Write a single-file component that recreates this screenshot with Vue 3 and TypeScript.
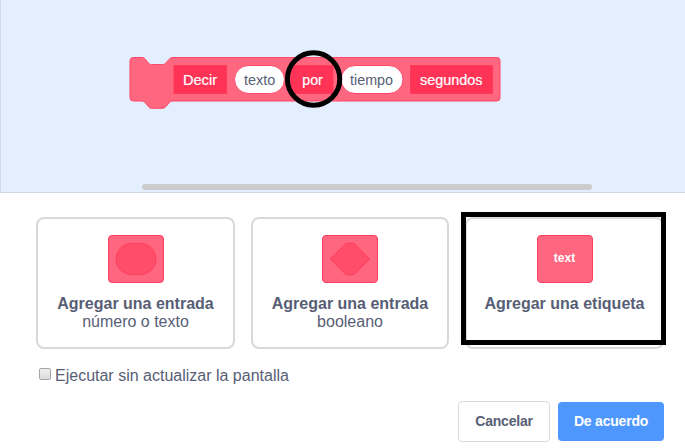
<script setup lang="ts">
import { ref } from 'vue'

interface BlockPart {
  kind: 'label' | 'input'
  text: string
  x: number
  width: number
  textX: number
  textWidth: number
}

interface Option {
  shape: 'round' | 'boolean' | 'label'
  title: string
  detail?: string
}

const parts: BlockPart[] = [
  { kind: 'label', text: 'Decir', x: 174, width: 52.5, textX: 183, textWidth: 34 },
  { kind: 'input', text: 'texto', x: 234.5, width: 50, textX: 244, textWidth: 31.3 },
  { kind: 'label', text: 'por', x: 290.5, width: 42.5, textX: 302.3, textWidth: 20.5 },
  { kind: 'input', text: 'tiempo', x: 341, width: 62, textX: 350, textWidth: 43 },
  { kind: 'label', text: 'segundos', x: 410.5, width: 82, textX: 420, textWidth: 62.5 },
]

const options: Option[] = [
  { shape: 'round', title: 'Agregar una entrada', detail: 'número o texto' },
  { shape: 'boolean', title: 'Agregar una entrada', detail: 'booleano' },
  { shape: 'label', title: 'Agregar una etiqueta' },
]

const warp = ref(false)
</script>

<template>
  <main class="dialog">
    <section class="workspace">
      <svg class="canvas" width="684" height="192" viewBox="1 0 684 192">
        <path
          class="block"
          d="M133.500 57.500H142C143.500 57.500 144.500 58.200 145.500 59.500L148 62.500C149.200 64 150 64.500 151.500 64.500H162.500C164 64.500 165 64 166.200 62.500L169 59.500C170 58.200 171 57.500 173 57.500H497Q500 57.500 500 60.500V98Q500 101 497 101H173C171 101 170 101.800 169 103L166.200 106.200C165 107.700 164 108.300 162.500 108.300H151.500C150 108.300 149.200 107.700 148 106.200L145.500 103C144.500 101.800 143.500 101 142 101H133.500Q130 101 130 98V60.500Q130 57.500 133.500 57.500Z"
        />
        <g v-for="part in parts" :key="part.text">
          <rect
            :class="part.kind"
            :x="part.x"
            y="65.500"
            :width="part.width"
            height="28"
            :rx="part.kind === 'input' ? 14 : 0"
          />
          <text
            :class="part.kind + '-text'"
            :x="part.textX"
            y="85"
            :textLength="part.textWidth"
            lengthAdjust="spacingAndGlyphs"
          >{{ part.text }}</text>
        </g>
        <circle class="ring" cx="313.600" cy="79" r="26.200" />
      </svg>
      <div class="scrollbar"></div>
    </section>

    <section class="options">
      <button v-for="option in options" :key="option.shape" class="option" type="button">
        <svg class="icon" width="56" height="48" viewBox="0 0 56 48">
          <rect class="tile" x=".5" y=".5" width="55" height="47" rx="3.500" />
          <rect v-if="option.shape === 'round'" class="slot" x="8" y="8.300" width="40" height="31.400" rx="15.700" />
          <path v-else-if="option.shape === 'boolean'" class="slot" d="M8.300 24 24 8.300H32L47.700 24 32 39.700H24Z" />
          <text v-else class="tile-text" x="27.500" y="27" text-anchor="middle">text</text>
        </svg>
        <strong>{{ option.title }}</strong>
        <span v-if="option.detail">{{ option.detail }}</span>
        <i v-if="option.shape === 'label'" class="marker"></i>
      </button>
    </section>

    <label class="warp">
      <input v-model="warp" type="checkbox" />
      <span>Ejecutar sin actualizar la pantalla</span>
    </label>

    <footer class="actions">
      <button class="cancel" type="button">Cancelar</button>
      <button class="accept" type="button">De acuerdo</button>
    </footer>
  </main>
</template>

<style>
body {
  margin: 0;
  background: #fff;
}
</style>

<style scoped>
.dialog {
  box-sizing: border-box;
  width: 685px;
  height: 448px;
  overflow: hidden;
  color: #575e75;
  font-family: "Liberation Sans", Arial, sans-serif;
}
.workspace {
  box-sizing: border-box;
  position: relative;
  height: 193px;
  border-left: 1px solid #cfdae5;
  border-bottom: 1px solid #cfdae5;
  background: #e3efff;
}
.canvas {
  display: block;
}
.block {
  fill: #ff6680;
  stroke: #ff4766;
}
.label {
  fill: #ff3355;
  stroke: #ff3b5c;
}
.input {
  fill: #fff;
  stroke: #ff4766;
}
.label-text,
.input-text {
  font-size: 14px;
}
.label-text {
  fill: #fff;
  stroke: #fff;
  stroke-width: .2px;
}
.input-text {
  fill: #575e75;
}
.ring {
  fill: none;
  stroke: #000;
  stroke-width: 5px;
}
.scrollbar {
  position: absolute;
  left: 141px;
  top: 184px;
  width: 450px;
  height: 6px;
  border-radius: 3px;
  background: #ccc;
}
.options {
  display: grid;
  grid-template-columns: 199px 198px 199px;
  gap: 16px;
  padding: 24px 0 0 36px;
}
button {
  box-sizing: border-box;
  margin: 0;
  font-family: inherit;
  color: inherit;
}
.option {
  position: relative;
  display: flex;
  flex-direction: column;
  align-items: center;
  height: 132px;
  padding: 16px 0 0;
  border: 2px solid #d9d9d9;
  border-radius: 8px;
  background: #fff;
  font-size: 16px;
  line-height: 18px;
}
.icon {
  display: block;
  margin-bottom: 12px;
}
.tile {
  fill: #ff6680;
  stroke: #ff3d5e;
}
.slot {
  fill: #ff4d6a;
  stroke: #ff3d5e;
}
.tile-text {
  fill: #fff;
  font-size: 12px;
  font-weight: 700;
}
.marker {
  box-sizing: border-box;
  position: absolute;
  left: -6px;
  top: -7px;
  width: 205px;
  height: 133px;
  border: 5px solid #000;
}
.warp {
  display: flex;
  align-items: center;
  height: 18px;
  margin: 18px 0 0 39px;
  font-size: 16px;
  line-height: 18px;
}
.warp input {
  appearance: none;
  box-sizing: border-box;
  width: 12px;
  height: 12px;
  margin: 0 4px 4px 0;
  border: 1px solid #a6a6a6;
  border-radius: 2px;
  background: linear-gradient(#eee, #dcdcdc);
}
.actions {
  display: flex;
  justify-content: flex-end;
  align-items: center;
  gap: 8px;
  padding: 16px 21px 0 0;
}
.cancel,
.accept {
  padding: 0 0 2px;
  border-radius: 4px;
  font-size: 14px;
  font-weight: 700;
  letter-spacing: -.2px;
}
.cancel {
  width: 92px;
  height: 41px;
  border: 1px solid #d9d9d9;
  background: #fff;
}
.accept {
  width: 106px;
  height: 39px;
  border: 0;
  background: #4d97ff;
  color: #fff;
}
</style>
